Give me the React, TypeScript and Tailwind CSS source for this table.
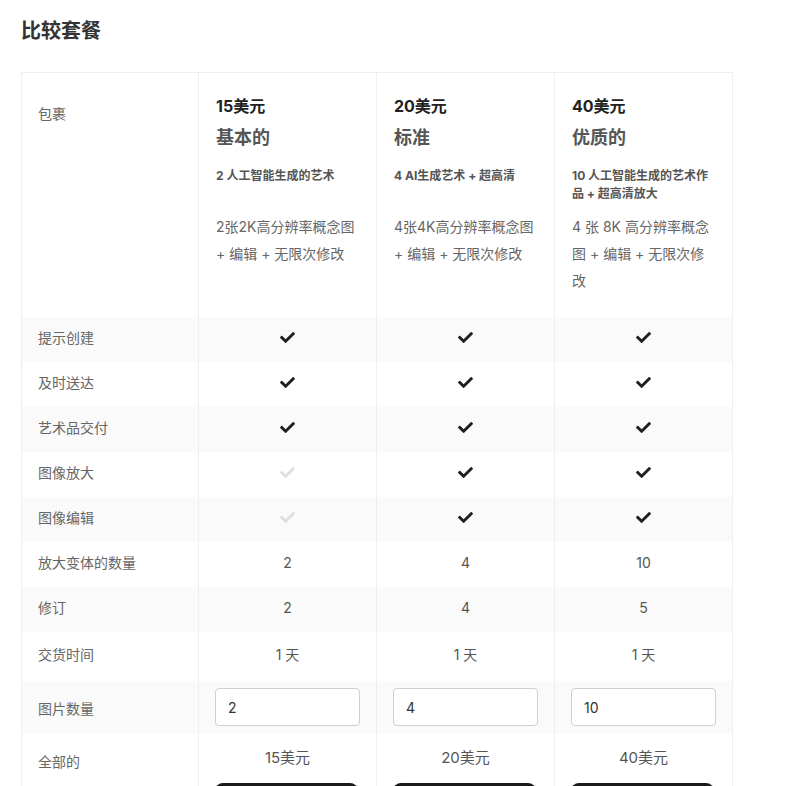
import { FaCheck } from 'react-icons/fa';

const plans = [
  {
    price: '15美元',
    name: '基本的',
    summary: '2 人工智能生成的艺术',
    desc: '2张2K高分辨率概念图 + 编辑 + 无限次修改',
    qty: '2',
  },
  {
    price: '20美元',
    name: '标准',
    summary: '4 AI生成艺术 + 超高清',
    desc: '4张4K高分辨率概念图 + 编辑 + 无限次修改',
    qty: '4',
  },
  {
    price: '40美元',
    name: '优质的',
    summary: '10 人工智能生成的艺术作品 + 超高清放大',
    desc: '4 张 8K 高分辨率概念图 + 编辑 + 无限次修改',
    qty: '10',
  },
];

type Row = {
  label: string;
  values: (boolean | string)[];
  height: string;
  gray: boolean;
};

const rows: Row[] = [
  { label: '提示创建', values: [true, true, true], height: 'h-[45px]', gray: true },
  { label: '及时送达', values: [true, true, true], height: 'h-[45px]', gray: false },
  { label: '艺术品交付', values: [true, true, true], height: 'h-[45px]', gray: true },
  { label: '图像放大', values: [false, true, true], height: 'h-[45px]', gray: false },
  { label: '图像编辑', values: [false, true, true], height: 'h-[45px]', gray: true },
  { label: '放大变体的数量', values: ['2', '4', '10'], height: 'h-[45px]', gray: false },
  { label: '修订', values: ['2', '4', '5'], height: 'h-[45px]', gray: true },
  { label: '交货时间', values: ['1 天', '1 天', '1 天'], height: 'h-[49px]', gray: false },
];

const cols = 'grid grid-cols-[176px_178px_178px_178px]';

function Cell({ value }: { value: boolean | string }) {
  if (typeof value === 'string') {
    return <span className="text-[14px] text-[#555]">{value}</span>;
  }
  return (
    <FaCheck
      size={15}
      className={value ? 'text-[#1f1f1f]' : 'text-[#dedede]'}
    />
  );
}

export default function App() {
  return (
    <div
      className="min-h-screen bg-white px-[21px] pt-[17px]"
      style={{ fontFamily: 'Inter, "Noto Sans CJK SC", sans-serif' }}
    >
      <h2 className="text-[20px] leading-[28px] font-bold text-[#333]">比较套餐</h2>

      <div className="mt-[27px] w-[712px] border-x border-t border-[#efefef]">
        {/* header */}
        <div className={cols}>
          <div className="pl-4 pt-[30px] text-[14px] leading-[21px] text-[#666]">包裹</div>
          {plans.map((plan) => (
            <div key={plan.name} className="border-l border-[#efefef] pl-[17px] pr-5 pt-[21px] pb-[23px]">
              <div className="text-[16px] leading-[24px] font-bold text-[#222]">{plan.price}</div>
              <div className="mt-[7px] text-[18px] leading-[26px] font-semibold text-[#555]">
                {plan.name}
              </div>
              <div className="mt-4 h-[36px] text-[12px] leading-[18px] font-bold text-[#555]">
                {plan.summary}
              </div>
              <p className="mt-[10px] text-[14px] leading-[27px] text-[#666]">{plan.desc}</p>
            </div>
          ))}
        </div>

        {rows.map((row) => (
          <div key={row.label} className={`${cols} ${row.height} ${row.gray ? 'bg-[#fafafa]' : 'bg-white'}`}>
            <div className="flex items-center pb-[5px] pl-4 text-[14px] text-[#666]">{row.label}</div>
            {row.values.map((v, i) => (
              <div key={i} className="flex items-center justify-center border-l border-[#efefef] pb-[5px]">
                <Cell value={v} />
              </div>
            ))}
          </div>
        ))}

        {/* quantity */}
        <div className={`${cols} h-[53px] bg-[#fafafa]`}>
          <div className="flex items-center pl-4 pt-[2px] text-[14px] text-[#666]">图片数量</div>
          {plans.map((plan) => (
            <div key={plan.name} className="border-l border-[#efefef] px-4 pt-[7px]">
              <input
                readOnly
                value={plan.qty}
                className="h-[38px] w-full rounded border border-[#cfcfcf] bg-white px-3 text-[14px] text-[#333] outline-none"
              />
            </div>
          ))}
        </div>

        {/* total */}
        <div className={cols}>
          <div className="pl-4 pt-[17px] text-[14px] leading-[21px] text-[#666]">全部的</div>
          {plans.map((plan) => (
            <div key={plan.name} className="border-l border-[#efefef] px-4 pt-[12px] pb-4">
              <div className="text-center text-[15px] leading-[24px] text-[#555]">{plan.price}</div>
              <button
                aria-label="选择套餐"
                className="mt-[13px] h-[42px] w-[143px] rounded-lg bg-[#1a1a1a]"
              />
            </div>
          ))}
        </div>
      </div>
    </div>
  );
}
